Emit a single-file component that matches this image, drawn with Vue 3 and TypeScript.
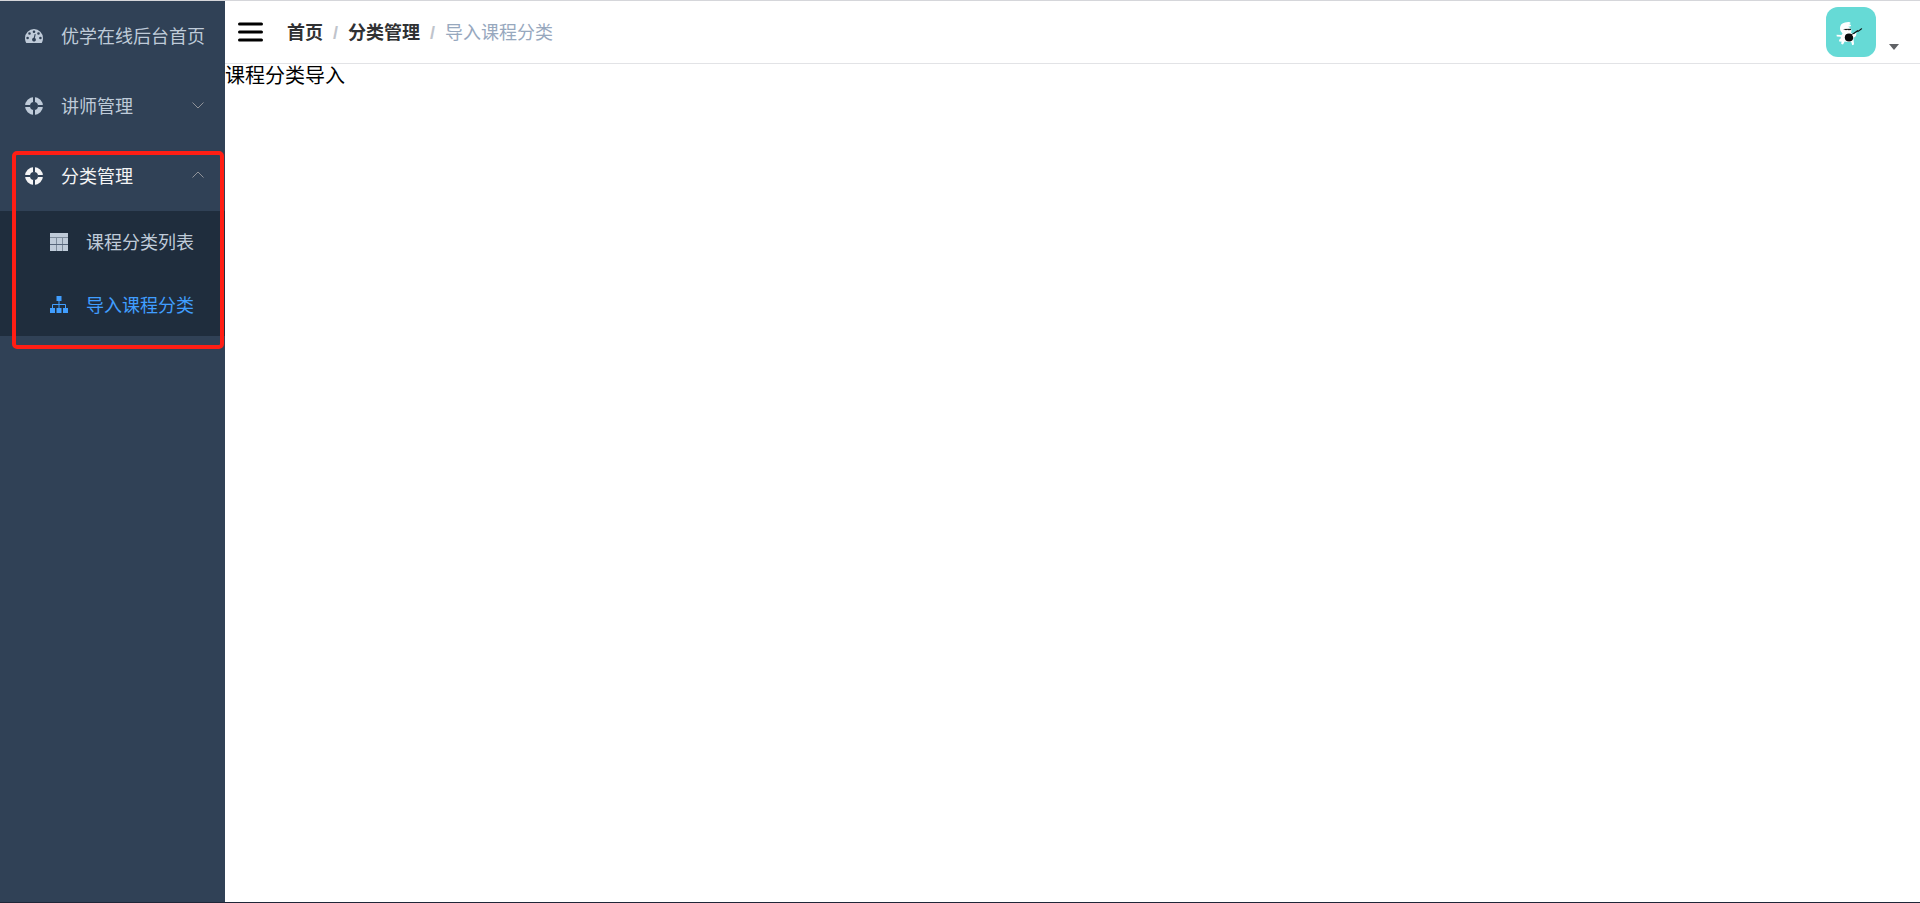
<script setup lang="ts">
import { ref } from 'vue'

interface Crumb {
  label: string
  kind: 'link' | 'current'
}

const crumbs: Crumb[] = [
  { label: '首页', kind: 'link' },
  { label: '分类管理', kind: 'link' },
  { label: '导入课程分类', kind: 'current' },
]

const categoryOpen = ref(true)
</script>

<template>
  <div class="app">
    <nav class="sidebar" aria-label="主导航">
      <ul class="menu">
        <li>
          <a class="item" href="#dashboard">
            <svg class="icon" viewBox="0 0 18 18" aria-hidden="true">
              <path
                fill="currentColor"
                fill-rule="evenodd"
                d="M9 2a9 9 0 0 0-9 9c0 2 .5 3.700 1.300 5h15.400c.8-1.300 1.300-3 1.300-5a9 9 0 0 0-9-9zM9 3.400a1.300 1.300 0 1 1 0 2.600 1.300 1.300 0 0 1 0-2.600zM4.500 5.200a1.300 1.300 0 1 1 0 2.600 1.300 1.300 0 0 1 0-2.600zM13.500 5.200a1.300 1.300 0 1 1 0 2.600 1.300 1.300 0 0 1 0-2.600zM2.600 9.700a1.300 1.300 0 1 1 0 2.600 1.300 1.300 0 0 1 0-2.600zM15.400 9.700a1.300 1.300 0 1 1 0 2.600 1.300 1.300 0 0 1 0-2.600zM9.700 6.900l1 .3-.8 3.800a1.900 1.900 0 1 1-1.200-.2z"
              />
            </svg>
            <span class="label">优学在线后台首页</span>
          </a>
        </li>
        <li>
          <button class="item" type="button" aria-expanded="false">
            <svg class="icon" viewBox="0 0 18 18" aria-hidden="true">
              <circle cx="9" cy="9" r="6.500" fill="none" stroke="currentColor" stroke-width="5" />
              <path class="cut" d="M9 0v5M9 13v5M0 9h5M13 9h5" />
            </svg>
            <span class="label">讲师管理</span>
            <svg class="chevron" viewBox="0 0 12 12" aria-hidden="true"><path d="M.5 2.500l5.500 5.500 5.500-5.500" /></svg>
          </button>
        </li>
        <li class="group">
          <button
            class="item open"
            type="button"
            :aria-expanded="categoryOpen"
            @click="categoryOpen = !categoryOpen"
          >
            <svg class="icon" viewBox="0 0 18 18" aria-hidden="true">
              <circle cx="9" cy="9" r="6.500" fill="none" stroke="currentColor" stroke-width="5" />
              <path class="cut" d="M9 0v5M9 13v5M0 9h5M13 9h5" />
            </svg>
            <span class="label">分类管理</span>
            <svg class="chevron" viewBox="0 0 12 12" aria-hidden="true"><path d="M.5 7.500l5.500-5.500 5.500 5.500" /></svg>
          </button>
          <ul v-show="categoryOpen" class="submenu">
            <li>
              <a class="subitem" href="#category-list">
                <svg class="icon" viewBox="0 0 18 18" aria-hidden="true">
                  <path fill="currentColor" d="M0 0h18v18H0z" />
                  <path fill="none" stroke="#7d8b9b" d="M0 4.500h18M6.500 4v14M12.500 4v14" />
                  <path fill="none" stroke="#56657a" d="M0 11.500h18" />
                </svg>
                <span class="label">课程分类列表</span>
              </a>
            </li>
            <li>
              <a class="subitem active" href="#category-import" aria-current="page">
                <svg class="icon" viewBox="0 0 18 18" aria-hidden="true">
                  <path fill="currentColor" d="M6.500 0h5v5h-5zM0 12h5v5H0zM6.500 12h5v5h-5zM13 12h5v5h-5z" />
                  <path fill="none" stroke="currentColor" d="M9 5v7M2.500 12V8.500h13V12" />
                </svg>
                <span class="label">导入课程分类</span>
              </a>
            </li>
          </ul>
          <div class="highlight" aria-hidden="true"></div>
        </li>
      </ul>
    </nav>

    <div class="main">
      <header class="navbar">
        <button class="hamburger" type="button" aria-label="折叠菜单">
          <svg viewBox="0 0 25 20" width="25" height="20" aria-hidden="true">
            <path d="M1.500 2h22M1.500 10h22M1.500 18h22" stroke="#000" stroke-width="3" stroke-linecap="round" />
          </svg>
        </button>
        <nav aria-label="面包屑">
          <ol class="crumbs">
            <li v-for="crumb in crumbs" :key="crumb.label">
              <a v-if="crumb.kind === 'link'" class="crumb-link" href="#">{{ crumb.label }}</a>
              <span v-else class="crumb-current" aria-current="page">{{ crumb.label }}</span>
              <span v-if="crumb.kind === 'link'" class="slash" aria-hidden="true">/</span>
            </li>
          </ol>
        </nav>
        <button class="user" type="button" aria-label="用户菜单">
          <svg class="avatar" viewBox="0 0 50 50" aria-hidden="true">
            <rect width="50" height="50" fill="#66dad6" />
            <path
              fill="#fff"
              d="M14 21c0-3 2-5 5-5.500 2-.7 5-1 5.500.2.300 1-1 1.300-2 1.500 1.500 0 2.800.5 2.500 1.500-.300 1-2 .8-3 1 2 .8 3.500 2 3.500 4l-.5 2.300 3.500 1.500 1-2 1 .5-.5 3-2.500 2 .2 3 .3 3.500-1.800.7-1-3.500-3 .3-3.500-.5-1.700 3-1.800-.5.3-2.500-2 .3-.5-1.800 2-2-.5-1.300-3.700-.2-.3-1.800 5 .2 1-1.700C14.500 24.500 14 23 14 21z"
            />
            <path fill="#222" d="M17 22l8-.3v1.200l-2.500.4-1-.6-1.500.5z" />
            <ellipse cx="23" cy="30.500" rx="4.200" ry="3.900" fill="#0c0c0c" />
            <path d="M25.500 28l6.500-4.500" stroke="#111" stroke-width="1.200" />
            <path d="M31 24.500l4-3 1.200-.6-.6 1.600-3.600 2.500z" fill="#111" />
            <path fill="#fff" d="M26 27.500l3-.5 1 1.500-2.500 2z" />
          </svg>
          <svg class="caret" viewBox="0 0 10 6" aria-hidden="true"><path d="M0 0h10L5 6z" fill="#606266" /></svg>
        </button>
      </header>
      <main class="content">课程分类导入</main>
    </div>
    <div class="edge" aria-hidden="true"></div>
  </div>
</template>

<style>
body {
  margin: 0;
}
</style>

<style scoped>
.app {
  position: relative;
  box-sizing: border-box;
  display: flex;
  min-height: 100vh;
  border-top: 1px solid #d5d6da;
  background: #fff;
  color: #000;
  font-family: "Liberation Sans", "Noto Sans CJK SC", sans-serif;
  font-size: 18px;
}

ul,
ol {
  margin: 0;
  padding: 0;
  list-style: none;
}

a {
  color: inherit;
  text-decoration: none;
}

button {
  margin: 0;
  border: 0;
  background: none;
  color: inherit;
  font: inherit;
  cursor: pointer;
}

.sidebar {
  flex: 0 0 225px;
  background: #304156;
  color: #bfcbd9;
}

.item,
.subitem {
  box-sizing: border-box;
  display: flex;
  align-items: center;
  width: 100%;
  text-align: left;
  white-space: nowrap;
}

.item {
  height: 70px;
  padding: 0 0 0 25px;
}

.open {
  color: #f4f4f5;
}

.icon {
  flex: none;
  width: 18px;
  height: 18px;
  margin-right: 18px;
}

.label {
  flex: 1;
  padding-bottom: 2px;
}

.cut {
  fill: none;
  stroke: #304156;
  stroke-width: 2;
}

.chevron {
  flex: none;
  width: 12px;
  height: 12px;
  margin-right: 21px;
  fill: none;
  stroke: #909399;
}

.group {
  position: relative;
}

.submenu {
  display: grid;
  gap: 1px;
  background: #1f2d3d;
}

.subitem {
  height: 62px;
  padding-left: 50px;
}

.active {
  color: #409eff;
}

.highlight {
  position: absolute;
  inset: 10px 1px -13px 12px;
  border: 4px solid #ff1e14;
  border-radius: 5px;
  pointer-events: none;
}

.main {
  flex: 1;
  min-width: 0;
}

.navbar {
  display: flex;
  align-items: center;
  height: 62px;
  border-bottom: 1px solid #e2e3e6;
}

.hamburger {
  display: flex;
  padding: 0 12px 0 13px;
}

.crumbs {
  display: flex;
  padding: 0 0 2px 12px;
}

.crumb-link {
  color: #303133;
  font-weight: 700;
}

.crumb-current {
  color: #97a8be;
}

.slash {
  margin: 0 10px;
  color: #c0c4cc;
  font-weight: 700;
}

.user {
  display: flex;
  align-items: flex-end;
  gap: 13px;
  margin-left: auto;
  padding: 0 21px 0 0;
}

.avatar {
  width: 50px;
  height: 50px;
  border-radius: 12px;
}

.caret {
  width: 10px;
  height: 6px;
  margin-bottom: 7px;
}

.content {
  font-size: 20px;
  line-height: 24px;
}

.edge {
  position: absolute;
  inset: auto 0 0;
  height: 1px;
  background: #1f2638;
}
</style>
